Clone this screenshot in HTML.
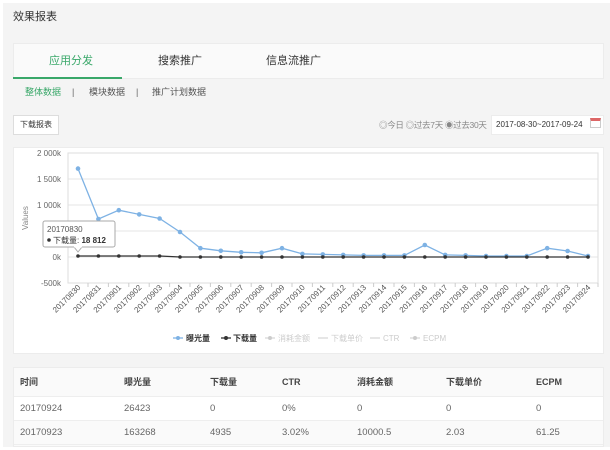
<!DOCTYPE html>
<html><head><meta charset="utf-8"><style>
*{margin:0;padding:0;box-sizing:border-box}
body{width:610px;height:450px;background:#fff;font-family:"Liberation Sans","Noto Sans CJK SC",sans-serif;position:relative;overflow:hidden;color:#333}
.bg{position:absolute;left:3px;top:3px;width:607px;height:444px;background:#f4f4f4}
.a{position:absolute;white-space:nowrap;line-height:12px}
.panel{position:absolute;background:#fff;border:1px solid #ececec}
.th{font-weight:bold;font-size:9px;color:#444}
.td{font-size:9.5px;color:#666}
</style></head><body>
<div class="bg"></div>
<div class="a" style="left:13px;top:11px;font-size:11px;color:#333">效果报表</div>
<div class="panel" style="left:13px;top:43px;width:591px;height:36px;background:#fafafa"></div>
<div class="a" style="left:13px;top:77px;width:109px;height:2px;background:#3aa86a"></div>
<div class="a" style="left:49px;top:55px;font-size:11px;color:#3aa86a">应用分发</div>
<div class="a" style="left:158px;top:55px;font-size:11px;color:#333">搜索推广</div>
<div class="a" style="left:266px;top:55px;font-size:11px;color:#333">信息流推广</div>
<div class="a" style="left:25px;top:86px;font-size:9px;color:#3aa86a">整体数据</div>
<div class="a" style="left:72px;top:86px;font-size:9px;color:#666">|</div>
<div class="a" style="left:89px;top:86px;font-size:9px;color:#555">模块数据</div>
<div class="a" style="left:136px;top:86px;font-size:9px;color:#666">|</div>
<div class="a" style="left:152px;top:86px;font-size:9px;color:#555">推广计划数据</div>
<div class="panel" style="left:13px;top:115px;width:46px;height:20px;border-color:#ddd;font-size:8px;color:#333;text-align:center;line-height:18px">下载报表</div>
<div class="a" style="left:379px;top:119px;font-size:8.5px;color:#888;letter-spacing:-0.3px">◎今日 ◎过去7天 ◉过去30天</div>
<div class="panel" style="left:491px;top:115px;width:113px;height:20px;font-size:8px;color:#333;padding:4px 0 0 4px">2017-08-30~2017-09-24</div>
<div class="a" style="left:590px;top:118px;width:11px;height:10px;border:1px solid #ccc;border-top:3px solid #d66"></div>
<div class="panel" style="left:13px;top:147px;width:591px;height:207px"></div>
<svg class="a" style="left:0;top:0" width="610" height="450" font-family="Liberation Sans, sans-serif">
<g stroke="#e6e6e6" stroke-width="1">
<line x1="68" y1="153" x2="598" y2="153"/><line x1="68" y1="179" x2="598" y2="179"/><line x1="68" y1="205" x2="598" y2="205"/><line x1="68" y1="231" x2="598" y2="231"/><line x1="68" y1="257" x2="598" y2="257"/><line x1="68" y1="283" x2="598" y2="283"/>
</g>
<rect x="68" y="153" width="530" height="130" fill="none" stroke="#ddd"/>
<g font-size="8" fill="#666" text-anchor="end">
<text x="61" y="156">2 000k</text><text x="61" y="182">1 500k</text><text x="61" y="208">1 000k</text><text x="61" y="260">0k</text><text x="61" y="286">-500k</text>
</g>
<text x="0" y="0" font-size="8" fill="#888" transform="translate(28,230) rotate(-90)">Values</text>
<g font-size="8" fill="#555" text-anchor="end" id="xl"></g>
<polyline fill="none" stroke="#7eb2e4" stroke-width="1.3" points="78,168.6 98.4,219 118.8,210.2 139.2,214.4 159.6,218.5 180,232 200.4,248.2 220.8,250.8 241.2,252.3 261.6,252.8 282,248.2 302.4,253.9 322.8,254.4 343.2,254.9 363.6,255.4 384,255.4 404.4,255.4 424.8,245 445.2,254.9 465.6,255.4 486,256 506.4,256 526.8,256 547.2,248.2 567.6,251 588,256"/>
<g fill="#7eb2e4">
<circle cx="78" cy="168.6" r="2.3"/><circle cx="98.4" cy="219" r="2.3"/><circle cx="118.8" cy="210.2" r="2.3"/><circle cx="139.2" cy="214.4" r="2.3"/><circle cx="159.6" cy="218.5" r="2.3"/><circle cx="180" cy="232" r="2.3"/><circle cx="200.4" cy="248.2" r="2.3"/><circle cx="220.8" cy="250.8" r="2.3"/><circle cx="241.2" cy="252.3" r="2.3"/><circle cx="261.6" cy="252.8" r="2.3"/><circle cx="282" cy="248.2" r="2.3"/><circle cx="302.4" cy="253.9" r="2.3"/><circle cx="322.8" cy="254.4" r="2.3"/><circle cx="343.2" cy="254.9" r="2.3"/><circle cx="363.6" cy="255.4" r="2.3"/><circle cx="384" cy="255.4" r="2.3"/><circle cx="404.4" cy="255.4" r="2.3"/><circle cx="424.8" cy="245" r="2.3"/><circle cx="445.2" cy="254.9" r="2.3"/><circle cx="465.6" cy="255.4" r="2.3"/><circle cx="486" cy="256" r="2.3"/><circle cx="506.4" cy="256" r="2.3"/><circle cx="526.8" cy="256" r="2.3"/><circle cx="547.2" cy="248.2" r="2.3"/><circle cx="567.6" cy="251" r="2.3"/><circle cx="588" cy="256" r="2.3"/>
</g>
<polyline fill="none" stroke="#333" stroke-width="1.3" points="78,256 159.6,256 180,257 588,257"/>
<g id="bk" fill="#333"></g>
<g>
<rect x="43" y="221" width="72" height="26" rx="2" fill="#fff" stroke="#aaa"/>
<path d="M74 247 L78 252 L82 247" fill="#fff" stroke="#aaa"/>
<rect x="74" y="246" width="8" height="1.5" fill="#fff"/>
<text x="47" y="232" font-size="8" fill="#555">20170830</text>
<circle cx="49" cy="240" r="1.8" fill="#333"/>
<text x="53" y="243" font-size="8" fill="#333" font-family="Liberation Sans, Noto Sans CJK SC, sans-serif">下载量: <tspan font-weight="bold">18 812</tspan></text>
</g>
<g font-size="8" font-family="Liberation Sans, Noto Sans CJK SC, sans-serif">
<line x1="173" y1="338" x2="183" y2="338" stroke="#7eb2e4" stroke-width="1.3"/><circle cx="178" cy="338" r="2" fill="#7eb2e4"/><text x="186" y="341" fill="#333" font-weight="bold">曝光量</text>
<line x1="221" y1="338" x2="231" y2="338" stroke="#333" stroke-width="1.3"/><circle cx="226" cy="338" r="2" fill="#333"/><text x="233" y="341" fill="#333" font-weight="bold">下载量</text>
<line x1="265" y1="338" x2="275" y2="338" stroke="#ccc"/><circle cx="270" cy="338" r="2" fill="#ccc"/><text x="278" y="341" fill="#ccc">消耗金额</text>
<line x1="318" y1="338" x2="328" y2="338" stroke="#ccc"/><text x="331" y="341" fill="#ccc">下载单价</text>
<line x1="370" y1="338" x2="380" y2="338" stroke="#ccc"/><text x="383" y="341" fill="#ccc">CTR</text>
<line x1="410" y1="338" x2="420" y2="338" stroke="#ccc"/><circle cx="415" cy="338" r="2" fill="#ccc"/><text x="423" y="341" fill="#ccc">ECPM</text>
</g>
</svg>
<div class="panel" style="left:13px;top:367px;width:591px;height:80px;background:#fafafa"></div>
<div class="a" style="left:14px;top:396px;width:589px;height:25px;background:#fff;border-top:1px solid #eee;border-bottom:1px solid #eee"></div>
<div class="a" style="left:14px;top:421px;width:589px;height:24px;background:#fafafa;border-bottom:1px solid #eee"></div>
<div class="a th" style="left:20px;top:376px">时间</div><div class="a th" style="left:124px;top:376px">曝光量</div><div class="a th" style="left:210px;top:376px">下载量</div><div class="a th" style="left:282px;top:376px">CTR</div><div class="a th" style="left:357px;top:376px">消耗金额</div><div class="a th" style="left:446px;top:376px">下载单价</div><div class="a th" style="left:536px;top:376px">ECPM</div>
<div class="a td" style="left:20px;top:403px">20170924</div><div class="a td" style="left:124px;top:403px">26423</div><div class="a td" style="left:210px;top:403px">0</div><div class="a td" style="left:282px;top:403px">0%</div><div class="a td" style="left:357px;top:403px">0</div><div class="a td" style="left:446px;top:403px">0</div><div class="a td" style="left:536px;top:403px">0</div>
<div class="a td" style="left:20px;top:427px">20170923</div><div class="a td" style="left:124px;top:427px">163268</div><div class="a td" style="left:210px;top:427px">4935</div><div class="a td" style="left:282px;top:427px">3.02%</div><div class="a td" style="left:357px;top:427px">10000.5</div><div class="a td" style="left:446px;top:427px">2.03</div><div class="a td" style="left:536px;top:427px">61.25</div>
<script>
var ns="http://www.w3.org/2000/svg",xl=document.getElementById("xl"),bk=document.getElementById("bk");
var d=["20170830","20170831","20170901","20170902","20170903","20170904","20170905","20170906","20170907","20170908","20170909","20170910","20170911","20170912","20170913","20170914","20170915","20170916","20170917","20170918","20170919","20170920","20170921","20170922","20170923","20170924"];
for(var i=0;i<26;i++){var x=78+i*20.4;var t=document.createElementNS(ns,"text");t.setAttribute("transform","translate("+(x+3)+",288) rotate(-45)");t.textContent=d[i];xl.appendChild(t);
var c=document.createElementNS(ns,"circle");c.setAttribute("cx",x);c.setAttribute("cy",i<5?256:257);c.setAttribute("r",1.8);bk.appendChild(c);
var tk=document.createElementNS(ns,"line");tk.setAttribute("x1",x+10);tk.setAttribute("x2",x+10);tk.setAttribute("y1",283);tk.setAttribute("y2",287);tk.setAttribute("stroke","#ccc");xl.appendChild(tk);}
</script>
</body></html>
